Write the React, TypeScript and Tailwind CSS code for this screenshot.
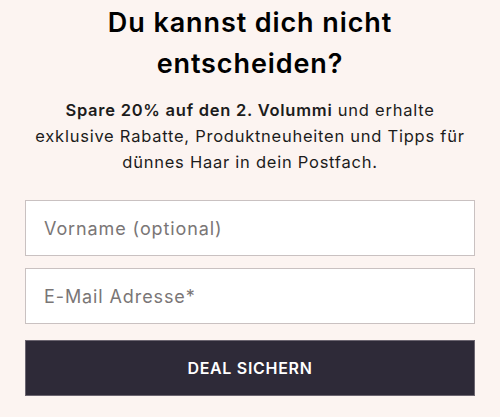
import React from 'react';

export default function App() {
  return (
    <div className="min-h-[417px] w-[500px] bg-[#fcf4f1] px-[25px] pt-[2px] font-['Inter',sans-serif] text-[#111111]">
      {/* Headline */}
      <h2 className="text-center text-[27px] font-semibold leading-[41px] tracking-[0.9px] text-black">
        Du kannst dich nicht
        <br />
        entscheiden?
      </h2>

      {/* Intro copy */}
      <p className="mt-[13px] text-center text-[16.5px] leading-[26px] tracking-[0.75px] text-[#1c1c1c]">
        <span className="font-semibold">Spare 20% auf den 2. Volummi</span> und erhalte
        <br />
        exklusive Rabatte, Produktneuheiten und Tipps für
        <br />
        dünnes Haar in dein Postfach.
      </p>

      {/* Signup form */}
      <form className="mt-[25px] flex flex-col" onSubmit={(e) => e.preventDefault()}>
        <input
          type="text"
          placeholder="Vorname (optional)"
          className="h-[56px] w-full border border-[#c9c1c1] bg-white px-[18px] text-[18px] tracking-[0.9px] text-[#333] outline-none placeholder:text-[#7a7676]"
        />
        <input
          type="email"
          placeholder="E-Mail Adresse*"
          className="mt-[12px] h-[56px] w-full border border-[#c9c1c1] bg-white px-[18px] text-[18px] tracking-[0.9px] text-[#333] outline-none placeholder:text-[#7a7676]"
        />
        <button
          type="submit"
          className="mt-[16px] h-[56px] w-full border border-[#6b6570] bg-[#2e2a38] text-[16px] font-semibold uppercase tracking-[0.7px] text-white"
        >
          Deal sichern
        </button>
      </form>
    </div>
  );
}
